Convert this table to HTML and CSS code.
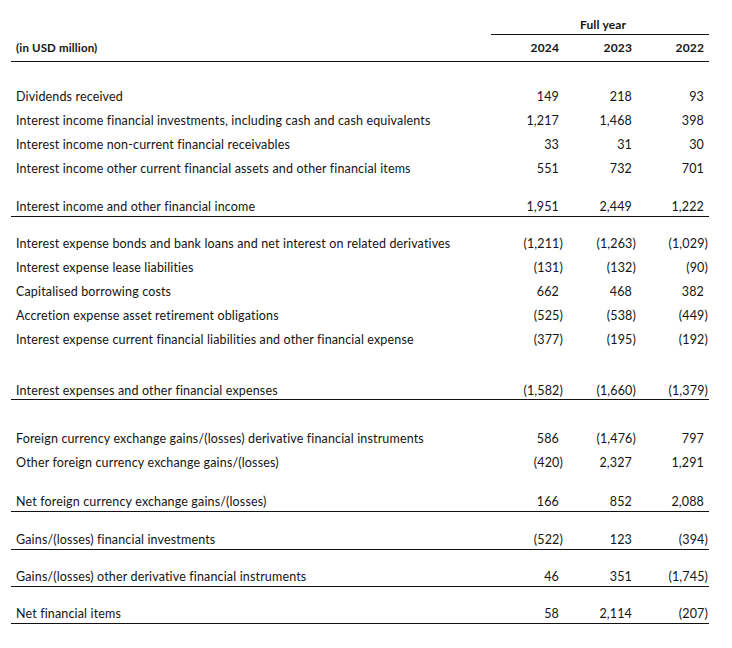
FILE: index.html
```html
<!DOCTYPE html>
<html lang="en">
<head>
<meta charset="utf-8">
<title>Financial items</title>
<link rel="stylesheet" href="styles.css">
</head>
<body>
<div class="wrap">
<table class="fin">
  <colgroup>
    <col class="c-label">
    <col class="c-a">
    <col class="c-b">
    <col class="c-c">
  </colgroup>
  <thead>
    <tr class="fy">
      <th></th>
      <th colspan="3" class="fy-cell">Full year</th>
    </tr>
    <tr class="years">
      <th class="unit">(in USD million)</th>
      <th class="num a">2024</th>
      <th class="num b">2023</th>
      <th class="num c">2022</th>
    </tr>
  </thead>
  <tbody>
    <tr class="first"><td class="lbl">Dividends received</td><td class="num a">149</td><td class="num b">218</td><td class="num c">93</td></tr>
    <tr><td class="lbl">Interest income financial investments, including cash and cash equivalents</td><td class="num a">1,217</td><td class="num b">1,468</td><td class="num c">398</td></tr>
    <tr><td class="lbl">Interest income non-current financial receivables</td><td class="num a">33</td><td class="num b">31</td><td class="num c">30</td></tr>
    <tr><td class="lbl">Interest income other current financial assets and other financial items</td><td class="num a">551</td><td class="num b">732</td><td class="num c">701</td></tr>
    <tr class="total t1"><td class="lbl">Interest income and other financial income</td><td class="num a">1,951</td><td class="num b">2,449</td><td class="num c">1,222</td></tr>

    <tr class="after"><td class="lbl">Interest expense bonds and bank loans and net interest on related derivatives</td><td class="num a"><span class="neg">(1,211)</span></td><td class="num b"><span class="neg">(1,263)</span></td><td class="num c"><span class="neg">(1,029)</span></td></tr>
    <tr><td class="lbl">Interest expense lease liabilities</td><td class="num a"><span class="neg">(131)</span></td><td class="num b"><span class="neg">(132)</span></td><td class="num c"><span class="neg">(90)</span></td></tr>
    <tr><td class="lbl">Capitalised borrowing costs</td><td class="num a">662</td><td class="num b">468</td><td class="num c">382</td></tr>
    <tr><td class="lbl">Accretion expense asset retirement obligations</td><td class="num a"><span class="neg">(525)</span></td><td class="num b"><span class="neg">(538)</span></td><td class="num c"><span class="neg">(449)</span></td></tr>
    <tr><td class="lbl">Interest expense current financial liabilities and other financial expense</td><td class="num a"><span class="neg">(377)</span></td><td class="num b"><span class="neg">(195)</span></td><td class="num c"><span class="neg">(192)</span></td></tr>
    <tr class="total t2"><td class="lbl">Interest expenses and other financial expenses</td><td class="num a"><span class="neg">(1,582)</span></td><td class="num b"><span class="neg">(1,660)</span></td><td class="num c"><span class="neg">(1,379)</span></td></tr>

    <tr class="after2"><td class="lbl">Foreign currency exchange gains/(losses) derivative financial instruments</td><td class="num a">586</td><td class="num b"><span class="neg">(1,476)</span></td><td class="num c">797</td></tr>
    <tr><td class="lbl">Other foreign currency exchange gains/(losses)</td><td class="num a"><span class="neg">(420)</span></td><td class="num b">2,327</td><td class="num c">1,291</td></tr>
    <tr class="total t3"><td class="lbl">Net foreign currency exchange gains/(losses)</td><td class="num a">166</td><td class="num b">852</td><td class="num c">2,088</td></tr>

    <tr class="total solo s1"><td class="lbl">Gains/(losses) financial investments</td><td class="num a"><span class="neg">(522)</span></td><td class="num b">123</td><td class="num c"><span class="neg">(394)</span></td></tr>
    <tr class="total solo"><td class="lbl">Gains/(losses) other derivative financial instruments</td><td class="num a">46</td><td class="num b">351</td><td class="num c"><span class="neg">(1,745)</span></td></tr>
    <tr class="total solo"><td class="lbl">Net financial items</td><td class="num a">58</td><td class="num b">2,114</td><td class="num c"><span class="neg">(207)</span></td></tr>
  </tbody>
</table>
</div>
</body>
</html>
```

FILE: styles.css
```css
html, body {
  margin: 0;
  padding: 0;
  background: #ffffff;
}

body {
  font-family: "Lato", "Noto Sans", sans-serif;
  font-size: 12.5px;
  letter-spacing: 0.15px;
  color: #141414;
}

.wrap {
  padding: 13px 0 0 11px;
}

.fin {
  width: 698px;
  border-collapse: collapse;
  table-layout: fixed;
}

.c-label { width: 480px; }
.c-a { width: 74px; }
.c-b { width: 72px; }
.c-c { width: 72px; }

.fin th,
.fin td {
  padding: 4px 0;
  line-height: 16px;
  font-weight: normal;
  white-space: nowrap;
}

.fin th {
  font-weight: 700;
  font-size: 12px;
}

.fy th {
  padding: 4px 0 1px;
}

.fy-cell {
  text-align: center;
  border-bottom: 1px solid #111;
  padding-left: 6px !important;
}

.years th {
  padding: 5px 0 5px;
  border-bottom: 1px solid #111;
}

.unit {
  text-align: left;
  padding-left: 5px !important;
  font-size: 11.5px !important;
}

.lbl {
  text-align: left;
  padding-left: 5px !important;
}

.num { text-align: right; }
.num.a { padding-right: 6px !important; }
.num.b { padding-right: 5px !important; }
.num.c { padding-right: 5px !important; }

.neg {
  margin-right: -4px;
}

.first td { padding-top: 27px; }

.total td {
  border-bottom: 1px solid #111;
  padding-bottom: 1px;
}

.t1 td { padding-top: 18px; }
.after td { padding-top: 19px; }
.t2 td { padding-top: 31px; padding-bottom: 0; }
.after2 td { padding-top: 31px; }
.t3 td { padding-top: 19px; }
.solo td { padding-top: 19px; }
.solo.s1 td { padding-top: 20px; }
```
